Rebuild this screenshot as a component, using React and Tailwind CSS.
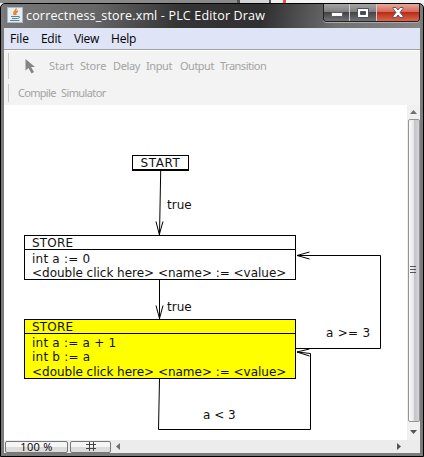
const DIAGRAM = "font-['DejaVu_Sans',sans-serif] text-[12px] text-[#111]";

function JavaIcon() {
  return (
    <svg width="16" height="16" viewBox="0 0 16 16" className="shrink-0">
      <rect x="0.5" y="0.5" width="15" height="15" fill="#e6eef3" stroke="#a9bac6" />
      <path d="M9 1.500C10 4 5 4.500 7.500 8M11 4C8 5.500 8.500 6 9 8" fill="none" stroke="#ea7d1e" strokeWidth="1.500" />
      <path d="M4 9.500h7M5 11.500h5.500M3 13.500h9.500M11 9.500c2.500-.5 2 1.700-.5 2" fill="none" stroke="#54809f" />
    </svg>
  );
}

function TitleBar() {
  return (
    <div className="flex h-6 shrink-0 items-start bg-[linear-gradient(100deg,#787878_0%,#666_22%,#343434_42%,#303030_62%,#707070_80%,#858585_100%)] pl-[3px]">
      <div className="mt-[3px]"><JavaIcon /></div>
      <span className="ml-[3px] mt-[4px] w-[245px] whitespace-nowrap font-['Open_Sans',sans-serif] text-[12.500px] leading-4 tracking-[0.170px] text-white">
        correctness_store.xml - PLC Editor Draw
      </span>
      <div className="ml-auto flex h-[18px] w-[97px] overflow-hidden rounded-b-[4px] border border-t-0 border-[#222] shadow-[0_1px_0_#aaa]">
        <div className="flex w-[26px] items-center justify-center border-r border-[#ccc] bg-[linear-gradient(#a5a5a5_0%,#7d7d7d_48%,#444_50%,#737373_100%)]">
          <svg width="12" height="6" viewBox="0 0 12 6" className="mt-[3px]"><rect x=".5" y="1.500" width="11" height="4" rx="1" fill="#fff" stroke="#555b6c" /></svg>
        </div>
        <div className="flex w-[27px] items-center justify-center border-r border-[#ccc] bg-[linear-gradient(#a5a5a5_0%,#7d7d7d_48%,#444_50%,#737373_100%)]">
          <svg width="12" height="10" viewBox="0 0 12 10"><path d="M.5.5h11v9H.5zM3.500 3.500h5v3h-5z" fill="#fff" fillRule="evenodd" stroke="#4c5268" /></svg>
        </div>
        <div className="flex flex-1 items-center justify-center bg-[linear-gradient(#e9a79a_0%,#d5695a_46%,#b92d17_50%,#d9664c_100%)]">
          <svg width="12" height="11" viewBox="0 0 12 11">
            <path d="M1 .5h3L6 3 8 .5h3v1L8 5.500l3 3.500v1.500H8L6 8l-2 2.500H1V9l3-3.500L1 1.500z" fill="#fff" stroke="#574e61" strokeWidth=".9" />
          </svg>
        </div>
      </div>
    </div>
  );
}

function Menu() {
  return (
    <div className="flex h-[22px] shrink-0 border-b border-[#a1a1a8] bg-[#dfe4f7] pl-[6px] font-['Open_Sans',sans-serif] text-[12px] leading-[21px] text-black">
      <span className="w-[31px]">File</span>
      <span className="w-[33px] tracking-[-0.3px]">Edit</span>
      <span className="w-[37px] tracking-[-0.3px]">View</span>
      <span className="tracking-[-0.2px]">Help</span>
    </div>
  );
}

function Tools() {
  return (
    <div className="flex h-[55px] shrink-0 flex-col border-t border-white bg-[#f3f3f3] font-['Noto_Sans',sans-serif] text-[11px] text-[#a3a3a3]">
      <div className="mt-[2px] flex h-[26px] items-center pl-[4px]">
        <div className="h-full w-px bg-[#c8c8c8]" />
        <svg width="12" height="16" viewBox="0 0 12 16" className="ml-[16px] mt-[2px]">
          <path d="M.5 0v11.500l3-2.500 3 5.500 2.500-1.500-3-5H10z" fill="#858585" />
        </svg>
        <div className="ml-[12px] flex whitespace-nowrap">
          <span className="w-[31px]">Start</span>
          <span className="w-[33px] tracking-[-0.2px]">Store</span>
          <span className="w-[33px] tracking-[-0.35px]">Delay</span>
          <span className="w-[34px] tracking-[-0.4px]">Input</span>
          <span className="w-[40px] tracking-[-0.5px]">Output</span>
          <span className="tracking-[-0.5px]">Transition</span>
        </div>
      </div>
      <div className="mt-[5px] flex h-[18px] items-center pl-[4px]">
        <div className="h-full w-px bg-[#c8c8c8]" />
        <span className="ml-[9px] w-[43px] tracking-[-0.7px]">Compile</span>
        <span className="tracking-[-0.6px]">Simulator</span>
      </div>
    </div>
  );
}

function Store({ place, lines }) {
  return (
    <div className={`absolute left-[20px] w-[272px] border border-black ${place} ${DIAGRAM}`}>
      <div className="h-[14px] border-b border-black pl-[7px] leading-[14px] tracking-[0.2px]">STORE</div>
      <div className="whitespace-pre pl-[7px] pt-[2px] leading-[14.300px]">
        {lines.map((line) => (
          <div key={line} className={line.startsWith("<") ? "tracking-[-0.020px]" : "tracking-[0.220px]"}>{line}</div>
        ))}
      </div>
    </div>
  );
}

function Canvas() {
  return (
    <div className="relative min-w-0 flex-1 overflow-hidden bg-white">
      <svg viewBox="4 105 403 335" width="403" height="335" className="absolute left-0 top-0" fill="none" stroke="#000" strokeWidth="1">
        <path d="M160.700 171L159.500 235M156 221.500L159.300 234.500L163 221.500" />
        <path d="M159.500 280V319M156 305.500L159.500 318.500L163 305.500" />
        <path d="M297 255.500H380.500V348.500H296M309.500 252L297 255.500L309.500 259" />
        <path d="M159.500 379L158.500 429.500H310.500V353.500L297 352M309.500 349L297 352L309.500 356" />
      </svg>
      <div className={`absolute left-[128px] top-[50px] h-4 w-[57px] border border-b-2 border-black text-center leading-[14px] tracking-[0.6px] ${DIAGRAM}`}>START</div>
      <Store place="top-[130px] h-[45px] bg-white" lines={["int a := 0", "<double click here> <name> := <value>"]} />
      <Store place="top-[214px] h-[60px] bg-[#ffff00]" lines={["int a := a + 1", "int b := a", "<double click here> <name> := <value>"]} />
      <span className={`absolute left-[163px] top-[93px] leading-[14px] ${DIAGRAM}`}>true</span>
      <span className={`absolute left-[163px] top-[195px] leading-[14px] ${DIAGRAM}`}>true</span>
      <span className={`absolute left-[322px] top-[221px] whitespace-nowrap leading-[14px] tracking-[0.3px] ${DIAGRAM}`}>a &gt;= 3</span>
      <span className={`absolute left-[199px] top-[303px] whitespace-nowrap leading-[14px] ${DIAGRAM}`}>a &lt; 3</span>
    </div>
  );
}

function VerticalScroll() {
  return (
    <div className="flex w-[13px] shrink-0 flex-col items-center bg-[#f0f0f0]">
      <svg width="7" height="4" viewBox="0 0 7 4" className="my-[5px] shrink-0"><path d="M0 4L3.500 0 7 4z" fill="#6e6e6e" /></svg>
      <div className="flex h-[303px] w-[12px] items-center justify-center rounded-[2px] border border-[#949494] bg-[linear-gradient(90deg,#fafafa,#e8e8ea_45%,#c4c4ca_55%,#d4d4da)]">
        <svg width="7" height="9" viewBox="0 0 7 9"><path d="M0 .5h6M0 3.500h6M0 6.500h6" stroke="#555" /></svg>
      </div>
      <svg width="7" height="4" viewBox="0 0 7 4" className="mt-[8px]"><path d="M0 0L3.500 4 7 0z" fill="#555" /></svg>
    </div>
  );
}

function BottomBar() {
  return (
    <div className="flex h-[13px] shrink-0 items-center bg-[#ececec]">
      <div className="ml-[1px] flex h-[12px] w-[63px] items-center justify-center rounded-[2px] border border-[#777] bg-[linear-gradient(#f6f6f6_50%,#dcdcdc_50%)] font-['Open_Sans',sans-serif] text-[11px] leading-[10px] tracking-[0.3px] text-black">100 %</div>
      <div className="ml-[2px] flex h-[12px] w-[41px] items-center justify-center rounded-[2px] border border-[#777] bg-[linear-gradient(#f6f6f6_50%,#dcdcdc_50%)]">
        <svg width="10" height="9" viewBox="0 0 10 9"><path d="M3.500 0v9M7.500 0v9M0 2.500h10M0 6.500h10" stroke="#444" /></svg>
      </div>
      <svg width="4" height="7" viewBox="0 0 4 7" className="ml-[5px]"><path d="M4 0L0 3.500 4 7z" fill="#6e6e6e" /></svg>
      <svg width="4" height="7" viewBox="0 0 4 7" className="ml-auto mr-[19px]"><path d="M0 0L4 3.500 0 7z" fill="#555" /></svg>
    </div>
  );
}

export default function App() {
  return (
    <div className="flex h-[457px] w-[424px] flex-col overflow-hidden bg-[#eee]">
      <div className="flex h-[3px] shrink-0 bg-[#8a8a8a]">
        <div className="w-[237px]" />
        <div className="w-[32px] border-l-[3px] border-[#555] bg-[#d4d4d4]" />
        <div className="w-[14px] border-l-2 border-[#555] bg-[#eee]" />
        <div className="w-[3px] bg-[#ee4b50]" />
        <div className="flex-1 bg-[#f3f3f3]" />
      </div>
      <div className="flex h-[454px] flex-col rounded-t-[5px] border border-black bg-[#7b7b7b] px-[3px] pb-[3px]">
        <TitleBar />
        <Menu />
        <Tools />
        <div className="flex h-[335px] shrink-0"><Canvas /><VerticalScroll /></div>
        <BottomBar />
      </div>
    </div>
  );
}
